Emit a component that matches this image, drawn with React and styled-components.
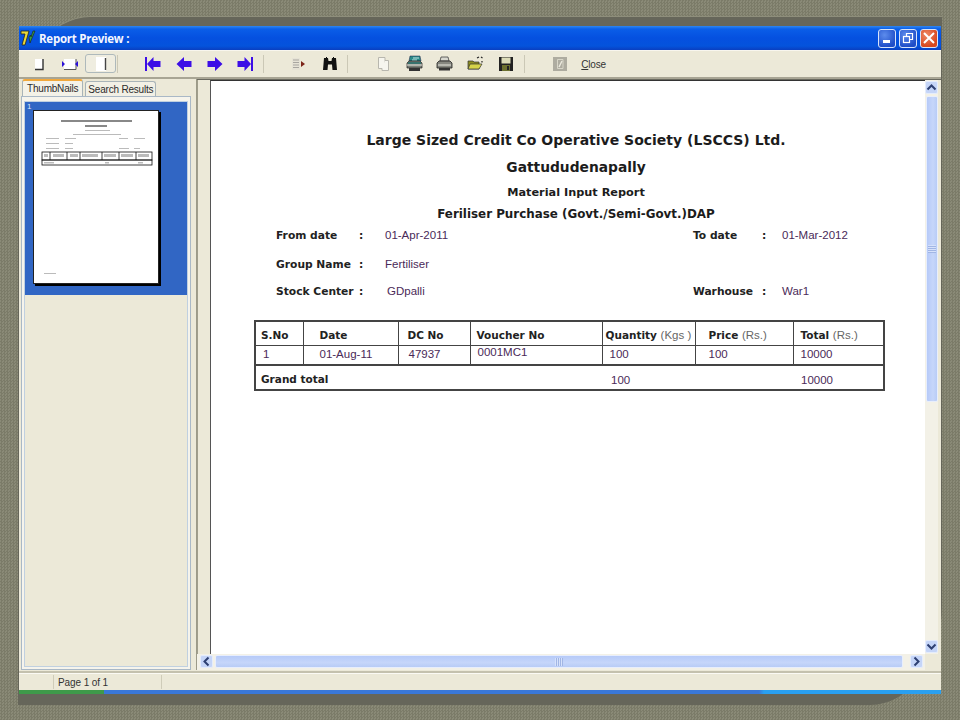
import React from "react";
import styled, { createGlobalStyle } from "styled-components";

const GlobalStyle = createGlobalStyle`
  html, body {
    margin: 0;
    padding: 0;
    background: #82826f;
  }
  * {
    box-sizing: border-box;
  }
`;

const Stage = styled.div`
  width: 960px;
  height: 720px;
  overflow: hidden;
  padding: 16px 18px 15px;
  background-color: #82826f;
  background-image: repeating-conic-gradient(#7b7b68 0 25%, #8a8a77 0 50%);
  background-size: 3px 3px;
`;

const Slide = styled.div`
  height: 689px;
  padding: 9px 1px 11px;
  background: #66665a;
  border-top: 1px solid #8e8e7b;
  border-top-left-radius: 72px 100px;
  border-bottom-right-radius: 72px 100px;
`;

const Window = styled.div`
  height: 668px;
  display: flex;
  flex-direction: column;
  background: #ece9d8;
  font-family: "Liberation Sans", Arial, sans-serif;
`;

const TitleBar = styled.div`
  height: 24px;
  flex: none;
  display: flex;
  align-items: center;
  padding: 0 3px 0 1px;
  background: linear-gradient(#2f86f0 0, #0a5ee8 3px, #0550e0 12px, #0453dc 20px, #0a3fc0 100%);
`;

const TitleText = styled.span`
  margin-left: 2px;
  flex: 1;
  color: #f4f7ff;
  font: bold 11.5px "Open Sans", "DejaVu Sans", sans-serif;
  letter-spacing: -0.25px;
`;

const WinButton = styled.div`
  width: 18px;
  height: 19px;
  margin-left: 3px;
  display: flex;
  align-items: center;
  justify-content: center;
  border: 1px solid #d8e4fa;
  border-radius: 3px;
  background: ${(p) =>
    p.$danger
      ? "radial-gradient(circle at 35% 30%, #ee8a68, #d8481f 70%)"
      : "radial-gradient(circle at 35% 30%, #5d8cec, #1f4ec8 75%)"};
`;

const Toolbar = styled.div`
  height: 29px;
  flex: none;
  display: flex;
  align-items: center;
  padding-left: 5px;
  border-bottom: 2px solid #a8a594;
  box-shadow: inset 0 1px 0 #f8f6ee;
`;

const ToolButton = styled.div`
  width: 30.7px;
  height: 19px;
  flex: none;
  display: flex;
  align-items: center;
  justify-content: center;
  border-radius: 3px;
  ${(p) => p.$active && "border: 1px solid #aeb9bb; background: #efede0;"}
`;

const ToolSep = styled.div`
  width: 1px;
  height: 18px;
  flex: none;
  margin: 0 ${(p) => p.$after}px 0 ${(p) => p.$before}px;
  background: #cbc8b6;
`;

const CloseLabel = styled.span`
  margin: 2px 0 0 6px;
  color: #333;
  font-size: 10px;
  letter-spacing: -0.2px;
  u {
    text-decoration-thickness: 1px;
  }
`;

const Body = styled.div`
  flex: 1;
  min-height: 0;
  display: flex;
`;

const LeftPane = styled.div`
  width: 172px;
  flex: none;
  display: flex;
  flex-direction: column;
  padding: 0 0 3px 2px;
`;

const Tabs = styled.div`
  height: 17px;
  flex: none;
  display: flex;
  align-items: flex-end;
  padding-left: 1px;
`;

const Tab = styled.div`
  height: ${(p) => (p.$active ? 17 : 15)}px;
  margin-right: 2px;
  padding: 0 ${(p) => (p.$active ? 4 : 2)}px;
  display: flex;
  align-items: center;
  color: #2c2c2c;
  font-size: 10px;
  letter-spacing: -0.2px;
  background: ${(p) => (p.$active ? "#f4f2e8" : "#f2f0e5")};
  border: 1px solid #a9b4b8;
  border-bottom: none;
  border-radius: 3px 3px 0 0;
  ${(p) => p.$active && "border-top: 2px solid #f0a83c;"}
`;

const TabPanel = styled.div`
  flex: 1;
  min-height: 0;
  padding: 5px 3px 3px;
  border: 1px solid #a9b8c6;
  background: #f6f4ec;
`;

const ThumbList = styled.div`
  height: 100%;
  background: #ece9d8;
  box-shadow: 0 0 0 1px #c0d0e0;
`;

const ThumbCell = styled.div`
  height: 193px;
  padding: 9px 0 0 9px;
  background: #3166c4;
  position: relative;
`;

const ThumbNumber = styled.span`
  position: absolute;
  left: 2px;
  top: 0;
  color: #dfe8fa;
  font-size: 8px;
`;

const ThumbPage = styled.div`
  width: 124px;
  height: 172px;
  background: #fff;
  box-shadow: 2px 2px 0 1px #000;
  outline: 1px solid #222;
`;

const Splitter = styled.div`
  width: 6px;
  flex: none;
  margin-bottom: 3px;
  border-right: 1px solid #9c9a88;
`;

const ReportPane = styled.div`
  flex: 1;
  min-width: 0;
  display: grid;
  grid-template-columns: minmax(0, 1fr) 16px;
  grid-template-rows: minmax(0, 1fr) 16px;
  padding-bottom: 3px;
  border-top: 1px solid #6a6a60;
`;

const Viewport = styled.div`
  padding-left: 12px;
  border-left: 1px solid #a09e8c;
  min-height: 0;
  background: #ece9d8;
`;

const Paper = styled.div`
  height: 100%;
  padding: 46px 0 0 43px;
  background: #fff;
  border-left: 1px solid #555;
  border-top: 1px solid #333;
`;

const ReportBlock = styled.div`
  width: 629px;
`;

const Heading = styled.div`
  padding-left: 15px;
  text-align: center;
  color: #1c1c1c;
  font-family: "DejaVu Sans", Verdana, sans-serif;
  font-weight: bold;
  font-size: ${(p) => p.$size}px;
  line-height: ${(p) => p.$line}px;
  white-space: nowrap;
`;

const FieldRow = styled.div`
  height: ${(p) => p.$height}px;
  display: grid;
  grid-template-columns: 83px 26px 308px 69px 20px 1fr;
  align-items: center;
  padding-left: 22px;
`;

const Label = styled.span`
  color: #222;
  font-family: "DejaVu Sans", Verdana, sans-serif;
  font-weight: bold;
  font-size: 10.7px;
  white-space: nowrap;
`;

const Value = styled.span`
  color: #4a2a58;
  font-size: 11.5px;
  padding-left: ${(p) => p.$nudge || 0}px;
`;

const Table = styled.table`
  width: 629px;
  margin-top: 20px;
  table-layout: fixed;
  border-collapse: collapse;
  border: 2px solid #444;
`;

const HeadCell = styled.th`
  height: 24px;
  padding: 3px 0 0 ${(p) => p.$pad}px;
  text-align: left;
  white-space: nowrap;
  color: #222;
  font-family: "DejaVu Sans", Verdana, sans-serif;
  font-size: 10.5px;
  border: 1px solid #444;
`;

const SubUnit = styled.span`
  color: #666;
  font-family: "Liberation Sans", Arial, sans-serif;
  font-weight: normal;
  font-size: 11.5px;
`;

const Cell = styled.td`
  height: 20px;
  padding: 0 0 ${(p) => p.$raise || 1}px ${(p) => p.$pad}px;
  color: #4a2a58;
  font-size: 11.5px;
  border: 1px solid #444;
  border-bottom-width: 2px;
`;

const TotalCell = styled.td`
  height: 25px;
  padding: 4px 0 0 ${(p) => p.$pad}px;
  color: #4a2a58;
  font-size: 11.5px;
`;

const TotalLabel = styled(TotalCell)`
  color: #222;
  font-family: "DejaVu Sans", Verdana, sans-serif;
  font-weight: bold;
  font-size: 10.5px;
  padding-top: 2px;
`;

const VScroll = styled.div`
  display: flex;
  flex-direction: column;
  margin-right: 3px;
  padding: 1px 0;
  background: #f3f1e7;
`;

const HScroll = styled.div`
  display: flex;
  align-items: flex-start;
  padding: 1px 2px 0 3px;
  background: #f3f1e7;
`;

const Corner = styled.div`
  background: #ece9d8;
`;

const ScrollButton = styled.div`
  width: 13px;
  height: 13px;
  flex: none;
  display: flex;
  align-items: center;
  justify-content: center;
  border-radius: 2px;
  background: #c5d5f8;
  border: 1px solid #e4ecfc;
`;

const VThumb = styled.div`
  width: 12px;
  height: 306px;
  margin: 2px 0 0 1px;
  flex: none;
  display: flex;
  align-items: center;
  justify-content: center;
  border: 1px solid #e8eefc;
  border-radius: 2px;
  background: linear-gradient(90deg, #b6caf8, #c6d6fa 60%, #b8ccf6);
`;

const HThumb = styled.div`
  flex: 1;
  height: 13px;
  margin: 0 7px 0 2px;
  display: flex;
  align-items: center;
  justify-content: center;
  border: 1px solid #e8eefc;
  border-radius: 2px;
  background: linear-gradient(#b6caf8, #c6d6fa 60%, #b8ccf6);
`;

const Grip = styled.div`
  width: 8px;
  height: 8px;
  opacity: 0.7;
  background: ${(p) =>
    p.$vertical
      ? "repeating-linear-gradient(#dfe8fc 0 1px, #93a9dc 1px 2px)"
      : "repeating-linear-gradient(90deg, #dfe8fc 0 1px, #93a9dc 1px 2px)"};
`;

const ScrollFill = styled.div`
  flex: 1;
`;

const StatusBar = styled.div`
  height: 17px;
  flex: none;
  display: flex;
  align-items: center;
  border-top: 1px solid #fbfaf4;
  box-shadow: 0 -2px 0 #c4c1ae;
  color: #333;
  font-size: 10px;
  letter-spacing: -0.1px;
`;

const StatusCell = styled.div`
  width: ${(p) => p.$width}px;
  height: 14px;
  flex: none;
  display: flex;
  align-items: center;
  padding-left: 4px;
  border-right: 1px solid #cfccb9;
`;

const TaskStrip = styled.div`
  height: 4px;
  flex: none;
  background: linear-gradient(90deg, #3f9a4a 0, #3f9a4a 85px, #3a78d8 85px, #3a78d8 740px, #2aa0f0 745px);
`;

const Logo = () => (
  <svg width="17" height="18" viewBox="0 0 17 18">
    <path d="M1 2h8L5 16H2l3-11H1z" fill="#e8d838" stroke="#222" strokeWidth=".8" />
    <path d="M9 8l1 6 5-12h-2l-2 6-.5-2z" fill="#38a040" stroke="#1a1a1a" strokeWidth=".6" />
  </svg>
);

const MinimizeGlyph = () => (
  <svg width="12" height="12" viewBox="0 0 12 12">
    <rect x="2" y="8" width="7" height="3" fill="#fff" />
  </svg>
);

const RestoreGlyph = () => (
  <svg width="12" height="12" viewBox="0 0 12 12" fill="none" stroke="#fff">
    <rect x="1.500" y="4.500" width="6" height="6" strokeWidth="1.2" />
    <path d="M4.500 4V1.500h6v6H8" strokeWidth="1.2" />
  </svg>
);

const CloseGlyph = () => (
  <svg width="12" height="12" viewBox="0 0 12 12" stroke="#fff" strokeWidth="2">
    <path d="M1 1l10 10M11 1L1 11" />
  </svg>
);

const SinglePageIcon = () => (
  <svg width="16" height="16" viewBox="0 0 16 16">
    <rect x="4" y="3" width="8" height="10" fill="#fff" />
    <path d="M12 3v10.500H4" fill="none" stroke="#333" strokeWidth="1.4" />
  </svg>
);

const FitWidthIcon = () => (
  <svg width="18" height="16" viewBox="0 0 18 16">
    <rect x="3" y="3" width="12" height="10" fill="#fff" />
    <path d="M15 3v10.500H3" fill="none" stroke="#555" />
    <path d="M1 5l3 3-3 3zM17 5l-3 3 3 3z" fill="#2a10d8" />
  </svg>
);

const FullPageIcon = () => (
  <svg width="16" height="16" viewBox="0 0 16 16">
    <rect x="3" y="1" width="10" height="14" fill="#fff" />
    <path d="M12.500 2v12" stroke="#444" strokeWidth="1.4" />
  </svg>
);

const ARROW = "#3c0ee6";

const FirstIcon = () => (
  <svg width="16" height="14" viewBox="0 0 16 14" fill={ARROW}>
    <rect x="0" y="0" width="2" height="14" />
    <path d="M2 7l6.500-7v4h7v6h-7v4z" />
  </svg>
);

const PrevIcon = () => (
  <svg width="16" height="14" viewBox="0 0 16 14" fill={ARROW}>
    <path d="M.5 7L8 0v4h7.500v6H8v4z" />
  </svg>
);

const NextIcon = () => (
  <svg width="16" height="14" viewBox="0 0 16 14" fill={ARROW}>
    <path d="M15.500 7L8 0v4H.5v6H8v4z" />
  </svg>
);

const LastIcon = () => (
  <svg width="16" height="14" viewBox="0 0 16 14" fill={ARROW}>
    <rect x="14" y="0" width="2" height="14" />
    <path d="M14 7L7.500 0v4H.5v6h7v4z" />
  </svg>
);

const OutlineIcon = () => (
  <svg width="16" height="16" viewBox="0 0 16 16">
    <rect x="1" y="2" width="8" height="12" fill="#e6e3d6" />
    <path d="M2 4h6M2 6.500h6M2 9h6M2 11.500h6" stroke="#a8a6a0" strokeWidth="1.2" />
    <path d="M10 5l4 3-4 3z" fill="#7c2418" />
  </svg>
);

const BinocularsIcon = () => (
  <svg width="16" height="16" viewBox="0 0 16 16" fill="#111">
    <path d="M2 2h4l.500 3h3L10 2h4l1 12H10.500L10 8.500H6L5.500 14H1z" />
    <path d="M4 1h1v3H4zM11 1h1v3h-1z" />
  </svg>
);

const BlankPageIcon = () => (
  <svg width="16" height="16" viewBox="0 0 16 16" fill="#f6f5ee" stroke="#b8b7ae">
    <path d="M2.500 1.500H9v11H2.500z" />
    <path d="M9 4.500h3.500v10H6v-2" />
  </svg>
);

const PrintSetupIcon = () => (
  <svg width="17" height="17" viewBox="0 0 17 17">
    <path d="M4 1h10l1 5H3z" fill="#2a8a88" stroke="#224" strokeWidth=".5" />
    <path d="M7 3h6M6 5h5" stroke="#bfe6e4" />
    <path d="M1 8l2-2h11l2 2v5H1z" fill="#7b8078" stroke="#222" strokeWidth=".7" />
    <path d="M1 10h15" stroke="#e8e8e0" />
    <rect x="3" y="13" width="11" height="3" fill="#333" />
    <path d="M2 8h13" stroke="#1c6e6a" strokeWidth="1.4" />
  </svg>
);

const PrinterIcon = () => (
  <svg width="17" height="17" viewBox="0 0 17 17">
    <path d="M5 2h7l1 4H4z" fill="#d8d8d0" stroke="#444" strokeWidth=".8" />
    <path d="M1 8l2-2h11l2 2v5H1z" fill="#85867f" stroke="#222" strokeWidth=".8" />
    <path d="M2 10h13" stroke="#e8e8e0" />
    <rect x="3" y="13" width="11" height="2.500" fill="#333" />
  </svg>
);

const OpenIcon = () => (
  <svg width="17" height="17" viewBox="0 0 17 17">
    <path d="M1 6h5l1 1h5v7H1z" fill="#8c8c20" stroke="#333" strokeWidth=".7" />
    <path d="M3 9h12l-3 5H1z" fill="#d6d44a" stroke="#333" strokeWidth=".7" />
    <path d="M10 3l2-1M14 2l1.500 1M15 6v1.500" stroke="#222" strokeWidth="1.2" />
  </svg>
);

const SaveIcon = () => (
  <svg width="16" height="16" viewBox="0 0 16 16">
    <rect x="1" y="1" width="14" height="14" fill="#222" />
    <rect x="3.500" y="1.500" width="9" height="6" fill="#dcdcb8" />
    <rect x="4" y="9" width="8" height="6" fill="#6c7030" />
    <rect x="9" y="10" width="2" height="4" fill="#222" />
  </svg>
);

const DisabledIcon = () => (
  <svg width="16" height="16" viewBox="0 0 16 16">
    <rect x="1" y="1" width="14" height="14" fill="#aeaca0" />
    <path d="M5.500 3.500h5.500v9H5.500z" fill="none" stroke="#d8d6c8" />
    <path d="M10 5l-3 6" stroke="#eceade" strokeWidth="1.4" />
  </svg>
);

const Chevron = ({ d }) => (
  <svg width="11" height="11" viewBox="0 0 11 11" fill="none" stroke="#2d3f72" strokeWidth="2">
    <path d={d} />
  </svg>
);

const ThumbDrawing = () => (
  <svg width="124" height="172" viewBox="0 0 124 172">
    <rect x="27" y="9" width="71" height="2" fill="#888" />
    <rect x="51" y="14" width="22" height="2" fill="#888" />
    <g fill="#bbb">
      <rect x="51" y="19" width="25" height="1" />
      <rect x="39" y="23" width="48" height="1" />
      <rect x="12" y="27" width="13" height="1" />
      <rect x="31" y="27" width="11" height="1" />
      <rect x="85" y="27" width="9" height="1" />
      <rect x="100" y="27" width="11" height="1" />
      <rect x="12" y="32" width="13" height="1" />
      <rect x="31" y="32" width="8" height="1" />
      <rect x="12" y="37" width="13" height="1" />
      <rect x="31" y="37" width="8" height="1" />
      <rect x="85" y="37" width="10" height="1" />
      <rect x="100" y="37" width="6" height="1" />
      <rect x="10" y="43" width="4" height="3" />
      <rect x="19" y="43" width="11" height="3" />
      <rect x="36" y="43" width="8" height="3" />
      <rect x="48" y="43" width="16" height="3" />
      <rect x="70" y="43" width="12" height="3" />
      <rect x="87" y="43" width="12" height="3" />
      <rect x="104" y="43" width="11" height="3" />
      <rect x="10" y="51" width="10" height="1.500" />
      <rect x="71" y="51" width="4" height="1.500" />
      <rect x="104" y="51" width="5" height="1.500" />
      <rect x="10" y="162" width="12" height="1" />
    </g>
    <g fill="none" stroke="#111" strokeWidth=".8">
      <rect x="8" y="41" width="110" height="8" />
      <rect x="8" y="49" width="110" height="5" />
      <path d="M16 41v8M33 41v8M46 41v8M68 41v8M85 41v8M102 41v8" />
    </g>
  </svg>
);

export default function App() {
  return (
    <Stage>
      <GlobalStyle />
      <Slide>
        <Window>
          <TitleBar>
            <Logo />
            <TitleText>Report Preview :</TitleText>
            <WinButton><MinimizeGlyph /></WinButton>
            <WinButton><RestoreGlyph /></WinButton>
            <WinButton $danger><CloseGlyph /></WinButton>
          </TitleBar>

          <Toolbar>
            <ToolButton><SinglePageIcon /></ToolButton>
            <ToolButton><FitWidthIcon /></ToolButton>
            <ToolButton $active><FullPageIcon /></ToolButton>
            <ToolSep $before={1} $after={20} />
            <ToolButton><FirstIcon /></ToolButton>
            <ToolButton><PrevIcon /></ToolButton>
            <ToolButton><NextIcon /></ToolButton>
            <ToolButton><LastIcon /></ToolButton>
            <ToolSep $before={2} $after={20} />
            <ToolButton><OutlineIcon /></ToolButton>
            <ToolButton><BinocularsIcon /></ToolButton>
            <ToolSep $before={2} $after={20} />
            <ToolButton><BlankPageIcon /></ToolButton>
            <ToolButton><PrintSetupIcon /></ToolButton>
            <ToolButton><PrinterIcon /></ToolButton>
            <ToolButton><OpenIcon /></ToolButton>
            <ToolButton><SaveIcon /></ToolButton>
            <ToolSep $before={2} $after={20} />
            <ToolButton><DisabledIcon /></ToolButton>
            <CloseLabel><u>C</u>lose</CloseLabel>
          </Toolbar>

          <Body>
            <LeftPane>
              <Tabs>
                <Tab $active>ThumbNails</Tab>
                <Tab>Search Results</Tab>
              </Tabs>
              <TabPanel>
                <ThumbList>
                  <ThumbCell>
                    <ThumbNumber>1</ThumbNumber>
                    <ThumbPage><ThumbDrawing /></ThumbPage>
                  </ThumbCell>
                </ThumbList>
              </TabPanel>
            </LeftPane>
            <Splitter />

            <ReportPane>
              <Viewport>
                <Paper>
                  <ReportBlock>
                    <Heading $size={14} $line={26}>Large Sized Credit Co Operative Society (LSCCS) Ltd.</Heading>
                    <Heading $size={13.8} $line={29}>Gattududenapally</Heading>
                    <Heading $size={11.3} $line={22}>Material Input Report</Heading>
                    <Heading $size={11.9} $line={20}>Feriliser Purchase (Govt./Semi-Govt.)DAP</Heading>

                    <FieldRow $height={22}>
                      <Label>From date</Label>
                      <Label>:</Label>
                      <Value>01-Apr-2011</Value>
                      <Label>To date</Label>
                      <Label>:</Label>
                      <Value>01-Mar-2012</Value>
                    </FieldRow>
                    <FieldRow $height={36}>
                      <Label>Group Name</Label>
                      <Label>:</Label>
                      <Value>Fertiliser</Value>
                    </FieldRow>
                    <FieldRow $height={18}>
                      <Label>Stock Center</Label>
                      <Label>:</Label>
                      <Value $nudge={2}>GDpalli</Value>
                      <Label>Warhouse</Label>
                      <Label>:</Label>
                      <Value>War1</Value>
                    </FieldRow>

                    <Table>
                      <colgroup>
                        <col style={{ width: 48 }} />
                        <col style={{ width: 95 }} />
                        <col style={{ width: 72 }} />
                        <col style={{ width: 132 }} />
                        <col style={{ width: 93 }} />
                        <col style={{ width: 98 }} />
                        <col style={{ width: 91 }} />
                      </colgroup>
                      <thead>
                        <tr>
                          <HeadCell $pad={5}>S.No</HeadCell>
                          <HeadCell $pad={16}>Date</HeadCell>
                          <HeadCell $pad={9}>DC No</HeadCell>
                          <HeadCell $pad={6}>Voucher No</HeadCell>
                          <HeadCell $pad={3}>Quantity <SubUnit>(Kgs )</SubUnit></HeadCell>
                          <HeadCell $pad={13}>Price <SubUnit>(Rs.)</SubUnit></HeadCell>
                          <HeadCell $pad={7}>Total <SubUnit>(Rs.)</SubUnit></HeadCell>
                        </tr>
                      </thead>
                      <tbody>
                        <tr>
                          <Cell $pad={7}>1</Cell>
                          <Cell $pad={16}>01-Aug-11</Cell>
                          <Cell $pad={10}>47937</Cell>
                          <Cell $pad={7} $raise={5}>0001MC1</Cell>
                          <Cell $pad={7}>100</Cell>
                          <Cell $pad={13}>100</Cell>
                          <Cell $pad={7}>10000</Cell>
                        </tr>
                        <tr>
                          <TotalLabel colSpan={4} $pad={5}>Grand total</TotalLabel>
                          <TotalCell colSpan={2} $pad={9}>100</TotalCell>
                          <TotalCell $pad={8}>10000</TotalCell>
                        </tr>
                      </tbody>
                    </Table>
                  </ReportBlock>
                </Paper>
              </Viewport>

              <VScroll>
                <ScrollButton><Chevron d="M1.500 7.500l4-4 4 4" /></ScrollButton>
                <VThumb><Grip $vertical /></VThumb>
                <ScrollFill />
                <ScrollButton><Chevron d="M1.500 3.500l4 4 4-4" /></ScrollButton>
              </VScroll>

              <HScroll>
                <ScrollButton><Chevron d="M7.500 1.500l-4 4 4 4" /></ScrollButton>
                <HThumb><Grip /></HThumb>
                <ScrollButton><Chevron d="M3.500 1.500l4 4-4 4" /></ScrollButton>
              </HScroll>
              <Corner />
            </ReportPane>
          </Body>

          <StatusBar>
            <StatusCell $width={35} />
            <StatusCell $width={108}>Page 1 of 1</StatusCell>
          </StatusBar>
          <TaskStrip />
        </Window>
      </Slide>
    </Stage>
  );
}
